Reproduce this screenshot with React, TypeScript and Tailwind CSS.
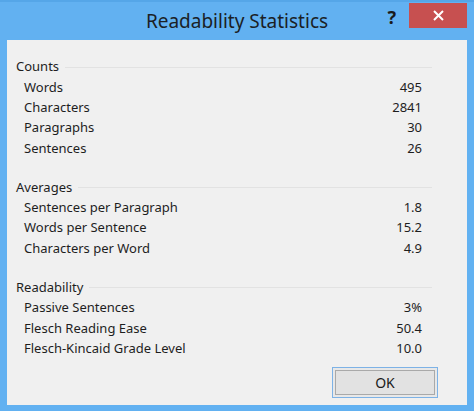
const sections = [
  {
    title: "Counts",
    rows: [
      ["Words", "495"],
      ["Characters", "2841"],
      ["Paragraphs", "30"],
      ["Sentences", "26"],
    ],
  },
  {
    title: "Averages",
    rows: [
      ["Sentences per Paragraph", "1.8"],
      ["Words per Sentence", "15.2"],
      ["Characters per Word", "4.9"],
    ],
  },
  {
    title: "Readability",
    rows: [
      ["Passive Sentences", "3%"],
      ["Flesch Reading Ease", "50.4"],
      ["Flesch-Kincaid Grade Level", "10.0"],
    ],
  },
]

function App() {
  return (
    <div
      className="w-[474px] h-[411px] bg-[#62b1f1] border-t-2 border-[#55a6e8] flex flex-col overflow-hidden"
      style={{ fontFamily: '"Segoe UI", "Noto Sans", "Open Sans", sans-serif' }}
    >
      <header className="h-[38px] grid grid-cols-[1fr_auto_1fr] items-start">
        <div />
        <h1 className="text-[19px] leading-none pt-[10px] text-[#1b1f26]">Readability Statistics</h1>
        <div className="flex justify-end items-start pr-[7px] pt-px">
          <span className="text-[18px] font-bold leading-none text-[#1a1a1a] mt-[5px] mr-[13px]">?</span>
          <button className="w-[58px] h-[25px] bg-[#c75050] flex items-center justify-center">
            <svg width="11" height="11" viewBox="0 0 11 11">
              <path d="M1 1L10 10M10 1L1 10" stroke="white" strokeWidth="2" />
            </svg>
          </button>
        </div>
      </header>

      <main className="ml-[7px] w-[460px] h-[365px] bg-[#f0f0f0] pt-[17px] pl-[9px] pr-[35px] text-[13px] text-[#1e1e1e] flex flex-col">
        {sections.map((section, index) => (
          <section key={index} className={index !== 0 ? "mt-[19px]" : ""}>
            <div className="h-[20.3px] flex items-center gap-[6px]">
              <span>{section.title}</span>
              <div className="flex-1 h-px bg-[#e2e2e2]" />
            </div>
            {section.rows.map(([label, value]) => (
              <div key={label} className="h-[20.3px] flex items-center justify-between pl-[8px] pr-[10px]">
                <span>{label}</span>
                <span>{value}</span>
              </div>
            ))}
          </section>
        ))}

        <div className="mt-auto mb-[7px] flex justify-end -mr-[6px]">
          <button className="w-[106px] h-[31px] border border-[#7db2e6] p-[2px] bg-[#e8e8e8]">
            <div className="h-full border border-[#a9a9a9] bg-[#e2e2e2] flex items-center justify-center text-[14px] text-[#1a1a1a]">
              OK
            </div>
          </button>
        </div>
      </main>
    </div>
  )
}

export default App
